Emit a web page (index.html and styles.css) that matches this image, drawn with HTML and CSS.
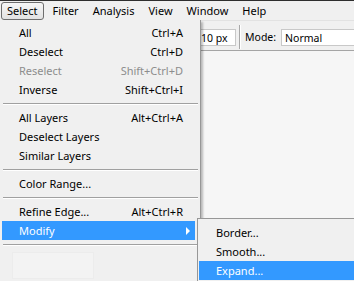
FILE: index.html
```html
<!DOCTYPE html>
<html>
<head>
    <title>Select menu</title>
    <meta charset="utf-8">
    <link rel="stylesheet" href="styles.css">
</head>
<body>
    <div class="app">
        <div class="menubar">
            <span class="menubar-item open">Select</span>
            <span class="menubar-item">Filter</span>
            <span class="menubar-item">Analysis</span>
            <span class="menubar-item">View</span>
            <span class="menubar-item">Window</span>
            <span class="menubar-item">Help</span>
        </div>

        <div class="toolbar">
            <div class="field size-field">10 px</div>
            <div class="tool-sep"></div>
            <span class="tool-label">Mode:</span>
            <div class="field mode-field">Normal</div>
        </div>
        <div class="canvas"></div>

        <!-- Select dropdown -->
        <div class="menu">
            <div class="menu-item"><span>All</span><span>Ctrl+A</span></div>
            <div class="menu-item"><span>Deselect</span><span>Ctrl+D</span></div>
            <div class="menu-item disabled"><span>Reselect</span><span>Shift+Ctrl+D</span></div>
            <div class="menu-item"><span>Inverse</span><span>Shift+Ctrl+I</span></div>
            <div class="menu-sep"></div>
            <div class="menu-item"><span>All Layers</span><span>Alt+Ctrl+A</span></div>
            <div class="menu-item"><span>Deselect Layers</span></div>
            <div class="menu-item"><span>Similar Layers</span></div>
            <div class="menu-sep"></div>
            <div class="menu-item"><span>Color Range...</span></div>
            <div class="menu-sep"></div>
            <div class="menu-item"><span>Refine Edge...</span><span>Alt+Ctrl+R</span></div>
            <div class="menu-item active"><span>Modify</span><span class="arrow"></span></div>
            <div class="menu-sep"></div>
            <div class="ghost"></div>
        </div>

        <!-- Modify submenu -->
        <div class="submenu">
            <div class="menu-item"><span>Border...</span></div>
            <div class="menu-item"><span>Smooth...</span></div>
            <div class="menu-item active"><span>Expand...</span></div>
        </div>
    </div>
</body>
</html>
```

FILE: styles.css
```css
body {
    margin: 0;
    font-family: "Noto Sans", "Liberation Sans", sans-serif;
    font-size: 11px;
    color: #000;
}
.app {
    position: relative;
    width: 354px;
    height: 281px;
    overflow: hidden;
    background: #f6f6f6;
}
.menubar {
    display: flex;
    align-items: center;
    height: 19px;
    border-top: 1px solid #2e2e2e;
    background: #f0f0f0;
    padding-left: 1px;
}
.menubar-item {
    padding: 0 6px;
    height: 16px;
    line-height: 15px;
    border: 1px solid transparent;
    border-radius: 3px;
    margin-top: 1px;
}
.menubar-item.open {
    border-color: #6e6e6e;
    background: linear-gradient(#f6f6f6, #e2e2e2);
    padding: 0 5px;
    margin-right: 2px;
}
.toolbar {
    display: flex;
    align-items: flex-start;
    height: 21px;
    padding: 8px 0 0 190px;
    background: #f0f0f0;
    border-top: 1px solid #e2e2e2;
    border-bottom: 1px solid #a5a5a5;
}
.field {
    height: 17px;
    line-height: 16px;
    box-sizing: border-box;
    background: #fff;
    border: 1px solid #c8c8c8;
    font-size: 10.5px;
    padding: 0 3px;
}
.size-field {
    width: 46px;
    padding-left: 10px;
}
.tool-sep {
    width: 1px;
    height: 24px;
    margin: -4px 4px 0 3px;
    background: #a8a8a8;
    border-right: 1px solid #fff;
}
.tool-label {
    font-size: 10.5px;
    line-height: 16px;
    margin-right: 5px;
}
.mode-field {
    flex: 1;
    border-right: none;
}
.canvas {
    height: 231px;
}
.menu {
    position: absolute;
    top: 20px;
    left: 0;
    width: 201px;
    height: 270px;
    padding-top: 3px;
    box-sizing: border-box;
    background: #f0f0f0;
    border-right: 1px solid #979797;
    box-shadow: 2px 2px 2px rgba(0, 0, 0, 0.25);
}
.menu-item {
    display: flex;
    justify-content: space-between;
    align-items: center;
    height: 19px;
    margin: 0 5px 0 2px;
    padding: 0 12px 0 17px;
    white-space: nowrap;
}
.menu-item.disabled {
    color: #8d8d8d;
}
.menu-item.active {
    background: #3399ff;
    color: #fff;
}
.menu-sep {
    height: 1px;
    margin: 4px 2px 3px 3px;
    background: #a0a0a0;
    border-bottom: 1px solid #fff;
}
.arrow {
    width: 0;
    height: 0;
    border-left: 4px solid #fff;
    border-top: 4px solid transparent;
    border-bottom: 4px solid transparent;
    margin-right: -7px;
}
.ghost {
    width: 80px;
    height: 25px;
    margin: 6px 0 0 12px;
    background: #f3f3f3;
    border: 1px solid #ececec;
}
.submenu {
    position: absolute;
    top: 218px;
    left: 197px;
    width: 160px;
    height: 80px;
    padding-top: 4px;
    box-sizing: border-box;
    background: #f0f0f0;
    border: 1px solid #979797;
    box-shadow: 2px 2px 2px rgba(0, 0, 0, 0.25);
}
.submenu .menu-item {
    margin: 0 0 0 1px;
    padding-left: 17px;
}
```
